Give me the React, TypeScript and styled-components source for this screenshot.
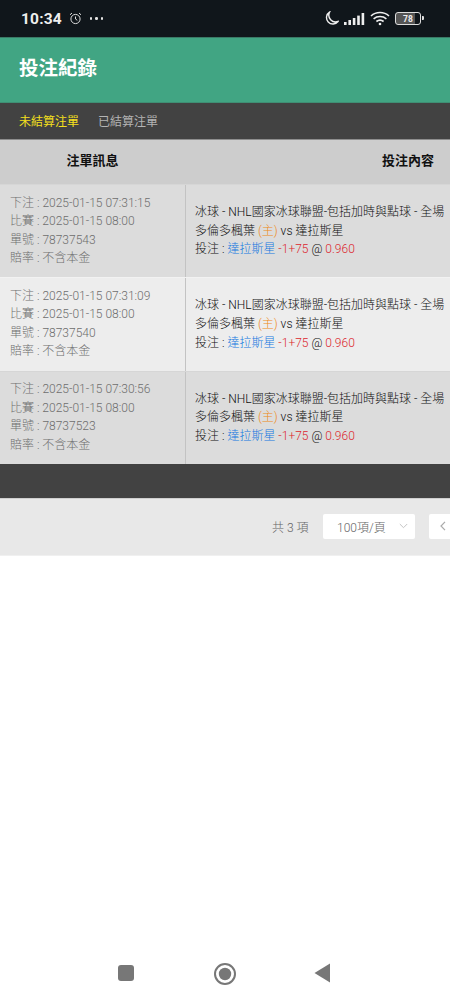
import React from "react";
import styled, { createGlobalStyle } from "styled-components";

const Global = createGlobalStyle`
  html, body { margin: 0; padding: 0; background: #fff; }
  body { font-family: Roboto, "Noto Sans CJK TC", sans-serif; width: 450px; height: 1000px; overflow: hidden; }
`;
const Page = styled.div`
  width: 450px; height: 1000px; display: flex; flex-direction: column; overflow: hidden;
`;
const StatusBar = styled.div`
  height: 37px; flex: none; background: #10161b; color: #eee; display: flex; align-items: center;
  padding: 0 26px 0 21px; border-bottom: 1px solid #3a7a66;
`;
const Time = styled.span`
  font: 700 15.5px Roboto, sans-serif; letter-spacing: .2px; margin-right: 7px;
`;
const StatusLeft = styled.div`display: flex; align-items: center; flex: 1; gap: 0;`;
const StatusRight = styled.div`display: flex; align-items: center; gap: 5px;`;
const Dots = styled.div`
  display: flex; gap: 3px; margin-left: 8px;
  i { width: 2.5px; height: 2.5px; border-radius: 50%; background: #e4e4e4; display: block; }
`;
const Battery = styled.div`
  width: 24px; height: 11px; border: 1px solid #ddd; border-radius: 3px; position: relative;
  display: flex; align-items: center; justify-content: center; font: 700 8.5px Roboto, sans-serif; color: #eee;
  margin-right: 3px; background: linear-gradient(90deg,#555 78%, transparent 78%);
  &::after { content: ""; position: absolute; right: -4px; top: 3px; width: 2px; height: 4px; background: #ddd; border-radius: 0 1px 1px 0; }
`;
const TitleBar = styled.div`
  height: 65px; flex: none; background: #41a583; display: flex; align-items: center; padding: 0 19px 7px;
  box-sizing: border-box; border-bottom: 1px solid #3f8f74;
`;
const Title = styled.h1`
  margin: 0; font: 700 19.5px "Noto Sans CJK TC", sans-serif; color: #fff; 
`;
const Tabs = styled.div`
  height: 34px; flex: none; background: #424242; display: flex; align-items: center; padding: 0 19px 2px; gap: 19px;
  box-sizing: content-box; border-bottom: 1px solid #8d8d8d;
`;
const Tab = styled.span<{ $active?: boolean }>`
  font: 400 12px "Noto Sans CJK TC", sans-serif; color: ${p => (p.$active ? "#f5e01c" : "#b4b4b4")};
`;
const HeaderRow = styled.div`
  height: 44px; flex: none; background: #cdcdcd; display: flex; align-items: center; box-sizing: border-box;
  font: 700 13px "Noto Sans CJK TC", sans-serif; color: #111; padding-bottom: 6px;
`;
const HeadLeft = styled.div`width: 185px; text-align: center;`;
const HeadRight = styled.div`flex: 1; text-align: right; padding-right: 16px;`;
const Row = styled.div<{ $alt?: boolean }>`
  height: 93.33px; flex: none; display: flex; background: ${p => (p.$alt ? "#ededed" : "#dcdcdc")};
  border-top: 1px solid ${p => (p.$alt ? "#f2f2f2" : "#d6d6d6")}; box-sizing: border-box;
`;
const Info = styled.div`
  width: 186px; flex: none; box-sizing: border-box; padding: 8.6px 0 0 10px; border-right: 1px solid #c3c3c3;
  font: 300 12px/18.5px Roboto, "Noto Sans CJK TC", sans-serif; color: #6e6e6e;
  div { white-space: nowrap; }
`;
const Detail = styled.div`
  flex: 1; padding: 18px 0 0 9px; font: 300 12px/18.6px Roboto, "Noto Sans CJK TC", sans-serif; color: #0e0e0e;
  white-space: nowrap; overflow: hidden;
  div { white-space: nowrap; }
`;
const Home = styled.span`color: #ee8a18;`;
const Team = styled.span`color: #1478e0;`;
const Odds = styled.span`color: #dc1f2c;`;
const DarkBar = styled.div`
  height: 35px; flex: none; background: #424242; border-bottom: 1px solid #cfcfcf; box-sizing: border-box;
`;
const Pager = styled.div`
  height: 57px; flex: none; background: #e8e8e8; display: flex; align-items: center; justify-content: flex-start;
  box-sizing: border-box; padding: 0 0 1px 272px; color: #666; font: 300 12px Roboto, "Noto Sans CJK TC", sans-serif;
  border-bottom: 1px solid #f0f0f0; overflow: hidden;
`;
const Total = styled.span`width: 51px; flex: none; white-space: nowrap;`;
const Select = styled.div`
  width: 92px; height: 25px; flex: none; background: #fff; border-radius: 2px; display: flex; align-items: center;
  box-sizing: border-box; padding: 0 7px 0 14px; justify-content: space-between; color: #666;
`;
const PrevBtn = styled.div`
  width: 30px; height: 25px; flex: none; margin-left: 14px; background: #fff; border-radius: 2px 0 0 2px;
  display: flex; align-items: center; padding-left: 11px; box-sizing: border-box;
`;
const Spacer = styled.div`flex: 1;`;
const NavBar = styled.div`
  height: 46px; flex: none; display: flex; align-items: flex-start; justify-content: flex-start; padding: 8px 0 0 117px; box-sizing: border-box;
`;
const NavItem = styled.div<{ $w: number }>`width: ${p => p.$w}px; flex: none; display: flex;`;
const SquareIcon = styled.svg`margin-top: 2px;`;
const TriangleIcon = styled.svg`margin-top: 1px;`;

const rows = [
  { placed: "2025-01-15 07:31:15", id: "78737543" },
  { placed: "2025-01-15 07:31:09", id: "78737540", alt: true },
  { placed: "2025-01-15 07:30:56", id: "78737523" },
];

export default function App() {
  return (
    <Page>
      <Global />
      <StatusBar>
        <StatusLeft>
          <Time>10:34</Time>
          <svg width="13" height="13" viewBox="0 0 13 13" fill="none" stroke="#ddd" strokeWidth="1">
            <circle cx="6.5" cy="7" r="4.6" />
            <path d="M6.5 4.5V7l1.8 1.3M1 2.8 3 1M12 2.8 10 1" />
          </svg>
          <Dots><i /><i /><i /></Dots>
        </StatusLeft>
        <StatusRight>
          <svg width="15" height="15" viewBox="0 0 15 15" fill="none" stroke="#eee" strokeWidth="1.4">
            <path d="M5.5 1.2A6.4 6.4 0 1 0 14 10.5 6.8 6.8 0 0 1 5.5 1.2Z" />
          </svg>
          <svg width="21" height="12" viewBox="0 0 21 12" fill="#eee">
            <rect x="0" y="9" width="2.6" height="3" />
            <rect x="4.4" y="7" width="2.6" height="5" />
            <rect x="8.8" y="5" width="2.6" height="7" />
            <rect x="13.2" y="2.6" width="2.6" height="9.4" />
            <rect x="17.6" y="0" width="2.6" height="12" />
          </svg>
          <svg width="20" height="15" viewBox="0 0 20 15" fill="none" stroke="#eee" strokeWidth="1.6">
            <path d="M1 5C6 .3 14 .3 19 5M3.6 7.8c3.6-3 9.2-3 12.8 0M6.4 10.5c2-1.5 5.2-1.5 7.2 0" />
            <circle cx="10" cy="13" r="1.3" fill="#eee" stroke="none" />
          </svg>
          <Battery>78</Battery>
        </StatusRight>
      </StatusBar>
      <TitleBar><Title>投注紀錄</Title></TitleBar>
      <Tabs>
        <Tab $active>未結算注單</Tab>
        <Tab>已結算注單</Tab>
      </Tabs>
      <HeaderRow>
        <HeadLeft>注單訊息</HeadLeft>
        <HeadRight>投注內容</HeadRight>
      </HeaderRow>
      {rows.map(r => (
        <Row key={r.id} $alt={r.alt}>
          <Info>
            <div>下注 : {r.placed}</div>
            <div>比賽 : 2025-01-15 08:00</div>
            <div>單號 : {r.id}</div>
            <div>賠率 : 不含本金</div>
          </Info>
          <Detail>
            <div>冰球 - NHL國家冰球聯盟-包括加時與點球 - 全場</div>
            <div>多倫多楓葉 <Home>(主)</Home> vs 達拉斯星</div>
            <div>投注 : <Team>達拉斯星</Team> <Odds>-1+75</Odds> @ <Odds>0.960</Odds></div>
          </Detail>
        </Row>
      ))}
      <DarkBar />
      <Pager>
        <Total>共 3 項</Total>
        <Select>
          <span>100項/頁</span>
          <svg width="9" height="6" viewBox="0 0 9 6" fill="none" stroke="#c4c4c4" strokeWidth="1"><path d="M.8 1 4.5 4.7 8.2 1" /></svg>
        </Select>
        <PrevBtn>
          <svg width="6" height="10" viewBox="0 0 6 10" fill="none" stroke="#aaa" strokeWidth="1.2"><path d="M5 .8 1 5l4 4.2" /></svg>
        </PrevBtn>
      </Pager>
      <Spacer />
      <NavBar>
        <NavItem $w={96}>
          <SquareIcon width="18" height="18" viewBox="0 0 18 18"><rect x="1" y="1" width="16" height="16" rx="3" fill="#777" /></SquareIcon>
        </NavItem>
        <NavItem $w={101}>
          <svg width="24" height="24" viewBox="0 0 24 24"><circle cx="12" cy="12" r="10" fill="none" stroke="#777" strokeWidth="2" /><circle cx="12" cy="12" r="6.2" fill="#777" /></svg>
        </NavItem>
        <NavItem $w={20}>
          <TriangleIcon width="17" height="20" viewBox="0 0 17 20"><path d="M16 0.5V19.5L0.5 10Z" fill="#777" /></TriangleIcon>
        </NavItem>
      </NavBar>
    </Page>
  );
}
